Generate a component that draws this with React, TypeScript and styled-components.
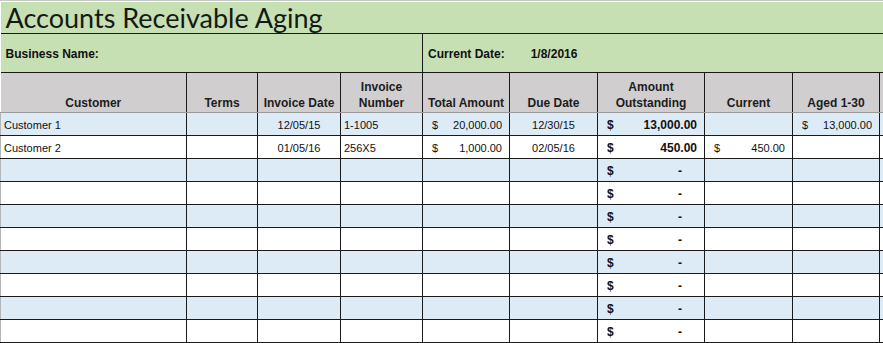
import React from "react";
import styled, { createGlobalStyle } from "styled-components";

const GlobalStyle = createGlobalStyle`
  html, body {
    margin: 0;
    padding: 0;
    background: #ffffff;
  }
`;

const GREEN = "#c6e0b4";
const HEAD = "#d0cece";
const STRIPE = "#ddebf7";

interface Row {
  customer: string;
  terms: string;
  invoiceDate: string;
  invoiceNumber: string;
  total?: string;
  dueDate: string;
  outstanding: string;
  current?: string;
  aged?: string;
}

const rows: Row[] = [
  {
    customer: "Customer 1",
    terms: "",
    invoiceDate: "12/05/15",
    invoiceNumber: "1-1005",
    total: "20,000.00",
    dueDate: "12/30/15",
    outstanding: "13,000.00",
    aged: "13,000.00",
  },
  {
    customer: "Customer 2",
    terms: "",
    invoiceDate: "01/05/16",
    invoiceNumber: "256X5",
    total: "1,000.00",
    dueDate: "02/05/16",
    outstanding: "450.00",
    current: "450.00",
  },
  ...Array.from({ length: 8 }, () => ({
    customer: "",
    terms: "",
    invoiceDate: "",
    invoiceNumber: "",
    dueDate: "",
    outstanding: "-",
  })),
];

const columns = [186, 71, 83, 82, 87, 88, 107, 88, 87, 40];

const Viewport = styled.div`
  width: 883px;
  height: 343px;
  overflow: hidden;
  background: #ffffff;
  border-top: 1px solid #c8c8c8;
  padding-top: 1px;
  box-sizing: border-box;
`;

const Sheet = styled.table`
  border-collapse: collapse;
  table-layout: fixed;
  width: ${columns.reduce((a, b) => a + b, 0)}px;
  font-family: "Liberation Sans", Arial, sans-serif;
  color: #111111;
`;

const TitleCell = styled.td`
  height: 31px;
  background: ${GREEN};
  border-bottom: 1px solid #1a1a1a;
  padding: 0 0 0 5px;
  font-family: Lato, "Liberation Sans", sans-serif;
  font-size: 27px;
  line-height: 31px;
  color: #141a12;
  white-space: nowrap;
  vertical-align: bottom;
`;

const InfoCell = styled.td<{ $divider?: boolean }>`
  height: 37px;
  background: ${GREEN};
  border-bottom: 1px solid #1a1a1a;
  border-right: ${(p) => (p.$divider ? "1px solid #1a1a1a" : "none")};
  padding: 1px 0 0 5px;
  font-size: 12px;
  font-weight: bold;
  white-space: nowrap;
  vertical-align: middle;
`;

const InfoValue = styled.span`
  display: inline-block;
  margin-left: 26px;
`;

const HeadCell = styled.th`
  height: 38px;
  background: ${HEAD};
  border-right: 1px solid #1a1a1a;
  border-bottom: 1px solid #9a9a9a;
  padding: 0 2px 1px;
  font-size: 12px;
  font-weight: bold;
  line-height: 16px;
  text-align: center;
  vertical-align: bottom;
  color: #1c1c1c;
  white-space: nowrap;
`;

const DataRow = styled.tr<{ $striped: boolean }>`
  background: ${(p) => (p.$striped ? STRIPE : "#ffffff")};
`;

const DataCell = styled.td<{ $align?: "left" | "center" | "right"; $first?: boolean }>`
  height: 19px;
  border-right: 1px solid #1a1a1a;
  border-bottom: 1px solid #1a1a1a;
  border-left: ${(p) => (p.$first ? "1px solid #b5b5b5" : "none")};
  padding: 0 3px 3px;
  font-size: 11px;
  line-height: 14px;
  text-align: ${(p) => p.$align ?? "left"};
  vertical-align: bottom;
  white-space: nowrap;
  overflow: hidden;
`;

const Money = styled.span<{ $bold?: boolean; $dash?: boolean }>`
  display: flex;
  justify-content: space-between;
  padding: 0 ${(p) => (p.$dash ? "19px" : "4px")} 0 6px;
  font-size: ${(p) => (p.$bold ? "12px" : "11px")};
  line-height: 14px;
  font-weight: ${(p) => (p.$bold ? "bold" : "normal")};
`;

const Amount: React.FC<{ value?: string; bold?: boolean }> = ({ value, bold }) =>
  value ? (
    <Money $bold={bold} $dash={value === "-"}>
      <span>$</span>
      <span>{value}</span>
    </Money>
  ) : null;

const headers: React.ReactNode[] = [
  "Customer",
  "Terms",
  "Invoice Date",
  <>Invoice<br />Number</>,
  "Total Amount",
  "Due Date",
  <>Amount<br />Outstanding</>,
  "Current",
  "Aged 1-30",
  "",
];

export default function App() {
  return (
    <>
      <GlobalStyle />
      <Viewport>
        <Sheet>
          <colgroup>
            {columns.map((w, i) => (
              <col key={i} style={{ width: w }} />
            ))}
          </colgroup>
          <tbody>
            <tr>
              <TitleCell colSpan={10}>Accounts Receivable Aging</TitleCell>
            </tr>
            <tr>
              <InfoCell colSpan={4} $divider>
                Business Name:
              </InfoCell>
              <InfoCell colSpan={6}>
                Current Date:
                <InfoValue>1/8/2016</InfoValue>
              </InfoCell>
            </tr>
            <tr>
              {headers.map((h, i) => (
                <HeadCell key={i}>{h}</HeadCell>
              ))}
            </tr>
            {rows.map((r, i) => (
              <DataRow key={i} $striped={i % 2 === 0}>
                <DataCell $first>{r.customer}</DataCell>
                <DataCell>{r.terms}</DataCell>
                <DataCell $align="center">{r.invoiceDate}</DataCell>
                <DataCell>{r.invoiceNumber}</DataCell>
                <DataCell>
                  <Amount value={r.total} />
                </DataCell>
                <DataCell $align="center">{r.dueDate}</DataCell>
                <DataCell>
                  <Amount value={r.outstanding} bold />
                </DataCell>
                <DataCell>
                  <Amount value={r.current} />
                </DataCell>
                <DataCell>
                  <Amount value={r.aged} />
                </DataCell>
                <DataCell />
              </DataRow>
            ))}
          </tbody>
        </Sheet>
      </Viewport>
    </>
  );
}
